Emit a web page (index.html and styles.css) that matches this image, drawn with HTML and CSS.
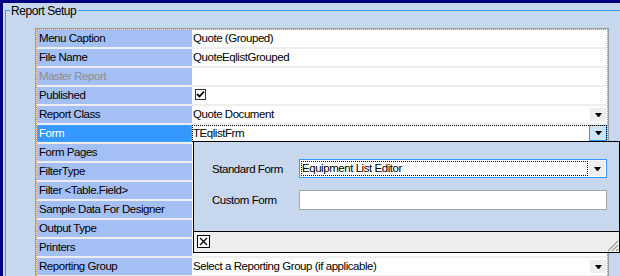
FILE: index.html
```html
<!DOCTYPE html>
<html lang="en">
<head>
<meta charset="UTF-8" />
<title>Report Setup</title>
<link rel="stylesheet" href="styles.css">
</head>
<body>

<div class="window">
  <div class="group">
    <div class="legend">Report Setup</div>

    <div class="grid">
      <div class="row"><div class="label">Menu Caption</div><div class="value">Quote (Grouped)</div></div>
      <div class="row"><div class="label">File Name</div><div class="value">QuoteEqlistGrouped</div></div>
      <div class="row"><div class="label disabled">Master Report</div><div class="value"></div></div>
      <div class="row"><div class="label">Published</div><div class="value"><span class="check"><svg width="9" height="9" viewBox="0 0 9 9"><path d="M1 4 L3.5 6.5 L8 1.5" fill="none" stroke="#000" stroke-width="1.8"/></svg></span></div></div>
      <div class="row"><div class="label">Report Class</div><div class="value"><span class="text">Quote Document</span><span class="drop"><svg width="7" height="4" viewBox="0 0 7 4"><polygon points="0,0 7,0 4,4 3,4"/></svg></span></div></div>
      <div class="row active"><div class="label">Form</div><div class="value"><span class="text">TEqlistFrm</span><span class="drop hot"><svg width="7" height="4" viewBox="0 0 7 4"><polygon points="0,0 7,0 4,4 3,4"/></svg></span></div></div>
      <div class="row"><div class="label">Form Pages</div><div class="value"></div></div>
      <div class="row"><div class="label">FilterType</div><div class="value"></div></div>
      <div class="row"><div class="label">Filter &lt;Table.Field&gt;</div><div class="value"></div></div>
      <div class="row"><div class="label">Sample Data For Designer</div><div class="value"></div></div>
      <div class="row"><div class="label">Output Type</div><div class="value"></div></div>
      <div class="row"><div class="label">Printers</div><div class="value"></div></div>
      <div class="row"><div class="label">Reporting Group</div><div class="value"><span class="text">Select a Reporting Group (if applicable)</span><span class="drop"><svg width="7" height="4" viewBox="0 0 7 4"><polygon points="0,0 7,0 4,4 3,4"/></svg></span></div></div>

      <div class="popup">
        <div class="popup-body">
          <div class="field-label">Standard Form</div>
          <div class="select">
            <span class="select-text">Equipment List Editor</span>
            <span class="select-btn"><svg width="7" height="4" viewBox="0 0 7 4"><polygon points="0,0 7,0 4,4 3,4"/></svg></span>
          </div>
          <div class="field-label">Custom Form</div>
          <div class="input"></div>
        </div>
        <div class="popup-foot">
          <span class="close"><svg width="9" height="9" viewBox="0 0 9 9"><path d="M1 1 L8 8 M8 1 L1 8" stroke="#000" stroke-width="1.3"/></svg></span>
          <svg class="grip" width="13" height="13" viewBox="0 0 13 13"><path d="M12 2 L2 12 M12 6 L6 12 M12 10 L10 12" stroke="#9a9a9a" stroke-width="1.2"/><path d="M13 3 L3 13 M13 7 L7 13 M13 11 L11 13" stroke="#fff" stroke-width="1"/></svg>
        </div>
      </div>
    </div>
  </div>
</div>

</body>
</html>
```

FILE: styles.css
```css
html, body {
  margin: 0;
  height: 276px;
  overflow: hidden;
}
body {
  background: #000080;
  font-family: "Liberation Sans", Arial, sans-serif;
  font-size: 11.5px;
  letter-spacing: -0.45px;
  color: #000;
}
.window {
  margin: 3px 0 0 3px;
  height: 273px;
  background: #c6d7ee;
  overflow: hidden;
}
.group {
  margin: 7px 0 0 2px;
  height: 400px;
  border-top: 1px solid #3399ff;
  border-left: 1px solid #3399ff;
}
.legend {
  width: max-content;
  margin: -7px 0 0 4px;
  padding: 0 2px 0 1px;
  line-height: 14px;
  font-size: 12px;
  background: #c6d7ee;
}
.grid {
  position: relative;
  margin: 11px 0 0 30px;
  width: 570px;
  background: #eeeeee;
  border: 1px dotted #e08a3c;
  outline: 1px solid #9c9c9c;
}
.row {
  display: grid;
  grid-template-columns: 155px 1fr;
  height: 17px;
  margin-bottom: 2px;
  line-height: 17px;
}
.label {
  background: #a4bff4;
  padding-left: 2px;
  white-space: nowrap;
}
.label.disabled {
  color: #8e8e8e;
}
.value {
  background: #fff;
  display: flex;
  align-items: flex-start;
  padding-left: 1px;
  white-space: nowrap;
}
.value .text {
  flex: 1;
}
.row.active .label {
  background: #3399ff;
  color: #fff;
  outline: 1px dotted #e08a3c;
  outline-offset: -1px;
}
.row.active .value {
  outline: 1px dotted #000;
  outline-offset: -1px;
}
.drop {
  display: flex;
  align-items: center;
  justify-content: center;
  width: 16px;
  height: 13px;
  margin: 2px 1px 0 0;
  background: #eeeeee;
}
.drop.hot {
  box-sizing: border-box;
  width: 18px;
  height: 16px;
  margin: 0;
  background: #cce4f7;
  border: 1px solid #3399ff;
}
.check {
  display: flex;
  align-items: center;
  justify-content: center;
  box-sizing: border-box;
  width: 11px;
  height: 11px;
  margin: 2px 0 0 2px;
  border: 1px solid #333;
  background: #fff;
}
.popup {
  position: absolute;
  left: 156px;
  top: 111px;
  width: 425px;
  border: 1px solid #000;
  background: #c6d7ee;
}
.popup-body {
  display: grid;
  grid-template-columns: 87px 1fr;
  row-gap: 12px;
  align-items: center;
  align-content: start;
  height: 72px;
  padding: 17px 12px 0 18px;
}
.select {
  display: flex;
  box-sizing: border-box;
  height: 19px;
  padding: 1px;
  background: #fff;
  border: 1px solid #3399ff;
}
.select-text {
  flex: 1;
  line-height: 15px;
  padding-left: 1px;
  outline: 1px dotted #000;
  outline-offset: -1px;
  white-space: nowrap;
}
.select-btn {
  display: flex;
  align-items: center;
  justify-content: center;
  width: 16px;
  margin-left: 1px;
  background: #eeeeee;
}
.input {
  box-sizing: border-box;
  height: 20px;
  background: #fff;
  border: 1px solid #a5a5a5;
}
.popup-foot {
  display: flex;
  justify-content: space-between;
  align-items: flex-start;
  height: 20px;
  background: #eeeeee;
  border-top: 1px solid #000;
}
.close {
  display: flex;
  align-items: center;
  justify-content: center;
  box-sizing: border-box;
  width: 13px;
  height: 13px;
  margin: 3px 0 0 3px;
  border: 1px solid #000;
  background: #fff;
}
.grip {
  margin-top: 7px;
}
```
